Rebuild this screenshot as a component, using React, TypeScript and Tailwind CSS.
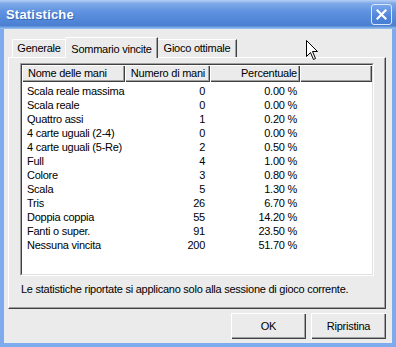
import React from 'react';

const rows: [string, string, string][] = [
  ['Scala reale massima', '0', '0.00 %'],
  ['Scala reale', '0', '0.00 %'],
  ['Quattro assi', '1', '0.20 %'],
  ['4 carte uguali (2-4)', '0', '0.00 %'],
  ['4 carte uguali (5-Re)', '2', '0.50 %'],
  ['Full', '4', '1.00 %'],
  ['Colore', '3', '0.80 %'],
  ['Scala', '5', '1.30 %'],
  ['Tris', '26', '6.70 %'],
  ['Doppia coppia', '55', '14.20 %'],
  ['Fanti o super.', '91', '23.50 %'],
  ['Nessuna vincita', '200', '51.70 %'],
];

const raised =
  'shadow-[inset_1px_1px_0_#ffffff,inset_-1px_-1px_0_#404040,inset_-2px_-2px_0_#a0a0a0]';

export default function App() {
  return (
    <div
      className="relative w-[396px] h-[347px] flex flex-col bg-[#3f77cd] text-[11px] tracking-[-0.25px] whitespace-nowrap text-black overflow-hidden"
      style={{ fontFamily: '"Liberation Sans", Arial, sans-serif' }}
    >
      {/* Title bar */}
      <div className="h-[29px] shrink-0 flex items-center justify-between pl-[6px] pr-[4px] bg-[linear-gradient(180deg,#b4d0f4_0%,#7ea9e8_12%,#5f92e0_40%,#4f84d6_75%,#4a7fd2_88%,#9cc6f2_100%)]">
        <span className="text-white font-bold text-[13px] tracking-[0.2px] [text-shadow:1px_1px_0_#3565b0]">
          Statistiche
        </span>
        <div className="w-[21px] h-[21px] rounded-[3px] border border-[#dce8fa] bg-[linear-gradient(180deg,#7aa6ea_0%,#4f84da_60%,#4a7ed4_100%)] flex items-center justify-center">
          <svg width="11" height="11" viewBox="0 0 11 11">
            <path d="M1.5 1.5 L9.5 9.5 M9.5 1.5 L1.5 9.5" stroke="#ffffff" strokeWidth="2.2" strokeLinecap="square" />
          </svg>
        </div>
      </div>

      {/* Body */}
      <div className="flex-1 flex flex-col border-l-[4px] border-r-[4px] border-b-[4px] border-[#7eaaee] bg-[#ebebeb] pl-[4px] pr-[6px]">
        {/* Tabs */}
        <div className="h-[20px] mt-[8px] flex items-end pl-[4px]">
          <div className="w-[54px] h-[18px] flex items-center justify-center border-t border-l border-white border-r border-r-[#808080] rounded-tl-[2px]">
            Generale
          </div>
          <div className="relative z-10 -ml-px -mb-px w-[93px] h-[21px] bg-[#ebebeb] flex items-start pt-[3px] justify-center border-t border-l border-white border-r border-r-[#404040] shadow-[inset_-1px_0_0_#a0a0a0] rounded-tl-[2px]">
            Sommario vincite
          </div>
          <div className="w-[79px] h-[18px] flex items-center justify-center border-t border-white border-r border-r-[#404040] shadow-[inset_-1px_0_0_#a0a0a0]">
            Gioco ottimale
          </div>
        </div>

        {/* Tab panel */}
        <div className="h-[252px] flex flex-col border-t border-l border-white border-r border-b border-r-[#404040] border-b-[#404040] shadow-[inset_-1px_-1px_0_#a0a0a0] pl-[11px] pr-[11px] pt-[5px]">
          {/* List view */}
          <div className="h-[213px] border border-t-[#a0a0a0] border-l-[#a0a0a0] border-r-white border-b-white">
            <div className="h-full flex flex-col border border-t-[#404040] border-l-[#404040] border-r-[#e0e0e0] border-b-[#e0e0e0] bg-white">
              <div className="h-[17px] shrink-0 flex bg-[#ebebeb]">
                <div className={`w-[103px] pl-[6px] flex items-center ${raised}`}>Nome delle mani</div>
                <div className={`w-[85px] pr-[5px] flex items-center justify-end ${raised}`}>Numero di mani</div>
                <div className={`w-[90px] pr-[3px] flex items-center justify-end ${raised}`}>Percentuale</div>
                <div className={`flex-1 ${raised}`} />
              </div>
              <div className="pt-[2px]">
                {rows.map(([name, count, pct]) => (
                  <div key={name} className="h-[14px] flex items-center">
                    <div className="w-[103px] pl-[5px]">{name}</div>
                    <div className="w-[85px] pr-[5px] text-right">{count}</div>
                    <div className="w-[90px] pr-[3px] text-right">{pct}</div>
                  </div>
                ))}
              </div>
            </div>
          </div>
          <div className="mt-[5px] pl-[1px]">
            Le statistiche riportate si applicano solo alla sessione di gioco corrente.
          </div>
        </div>

        {/* Buttons */}
        <div className="h-[26px] mt-[4px] flex justify-end gap-[5px]">
          <div className={`w-[75px] h-full flex items-center justify-center bg-[#ebebeb] ${raised}`}>OK</div>
          <div className={`w-[75px] h-full flex items-center justify-center bg-[#ebebeb] ${raised}`}>Ripristina</div>
        </div>
      </div>

      {/* Mouse pointer */}
      <svg className="absolute left-[306px] top-[40px]" width="13" height="21" viewBox="0 0 13 21">
        <path
          d="M0.5 0.5 L0.5 16.5 L4.5 12.5 L7.5 19.5 L9.5 18.5 L6.5 11.5 L11.5 11.5 Z"
          fill="#ffffff"
          stroke="#000000"
          strokeWidth="1"
          strokeLinejoin="miter"
        />
      </svg>
    </div>
  );
}
